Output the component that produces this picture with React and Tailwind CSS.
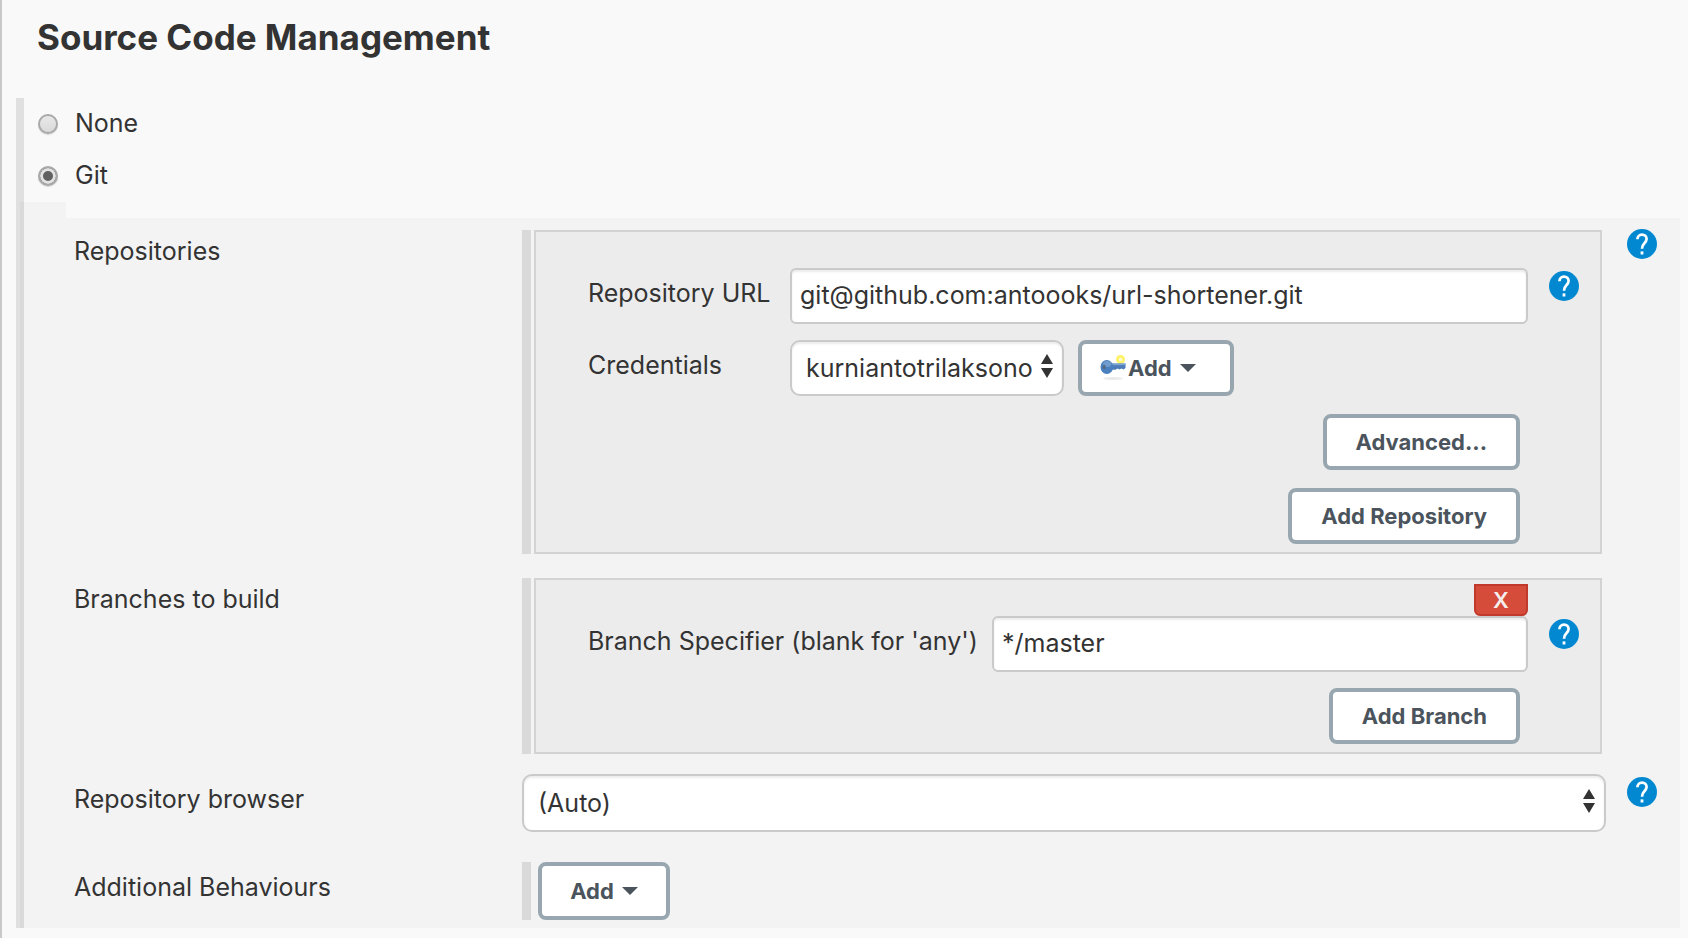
const inputBase =
  'w-full h-14 px-2 pb-[2px] border-2 border-[#cacaca] rounded-md bg-white text-[25px] text-[#333] shadow-[inset_0_2px_2px_rgba(0,0,0,0.08)] outline-none'

const buttonBase =
  'inline-flex items-center border-4 border-[#98a7af] rounded-lg bg-white text-[22px] leading-7 font-bold text-[#4b545d] whitespace-nowrap'

function HelpIcon({ topic }) {
  return (
    <button type="button" aria-label={`Help for ${topic}`} className="block w-[30px] h-[30px] shrink-0">
      <svg viewBox="0 0 30 30" className="block w-full h-full">
        <circle cx="15" cy="15" r="15" fill="#0288d1" />
        <path
          d="M10.4 10.3C10.4 7.4 12.4 5.6 15 5.6s4.6 1.8 4.6 4.5c0 1.9-1 3-2.4 4.4-1.5 1.4-2.2 2.5-2.2 5.3"
          fill="none"
          stroke="#fff"
          strokeWidth="2.7"
        />
        <rect x="13.6" y="22.4" width="2.8" height="3.1" fill="#fff" />
      </svg>
    </button>
  )
}

function SelectBox({ id, value, className }) {
  return (
    <div className={`relative ${className}`}>
      <select
        id={id}
        className="appearance-none w-full h-full pl-[14px] pr-6 border-2 border-[#cacaca] rounded-[10px] bg-white text-[25px] text-[#333] shadow-[inset_0_2px_2px_rgba(0,0,0,0.08)] outline-none"
      >
        <option>{value}</option>
      </select>
      <svg viewBox="0 0 12 24" className="absolute right-[11px] top-1/2 -mt-[14px] w-3 h-6 pointer-events-none">
        <path d="M6 0l6 10H0zM6 24l6-10H0z" fill="#333" />
      </svg>
    </div>
  )
}

function Caret() {
  return (
    <svg viewBox="0 0 16 8" className="w-4 h-2">
      <path d="M0 0h16L8 8z" fill="#4b545d" />
    </svg>
  )
}

function KeyIcon() {
  return (
    <svg viewBox="0 0 26 26" className="w-[26px] h-[26px]">
      <ellipse cx="13" cy="23.5" rx="10" ry="1.4" fill="#e9e9e9" />
      <circle cx="20.5" cy="4.5" r="4.5" fill="#fdf36b" />
      <circle cx="20.5" cy="4.5" r="1.8" fill="#fffbd0" />
      <path d="M11 8.6h14.5v4.4l-2 1.6-2-1.2-2 1.2-2-1-2 1.2H11z" fill="#4c7db9" />
      <path d="M11 8.6h14.5v1.6H11z" fill="#7ba4d3" />
      <ellipse cx="6.8" cy="12" rx="6.3" ry="7" fill="#4a80bf" />
      <ellipse cx="7.2" cy="9" rx="4.2" ry="3" fill="#6f9bce" />
      <ellipse cx="4.2" cy="12" rx="1.5" ry="2.2" fill="#56697f" />
    </svg>
  )
}

function ScmRadio({ id, label, checked }) {
  return (
    <div className="flex items-center gap-[17px] h-[52px] pl-[14px]">
      <input
        type="radio"
        name="scm"
        id={id}
        defaultChecked={checked}
        className="appearance-none w-5 h-5 rounded-full border-2 border-[#a9a9a9] bg-linear-to-b from-[#e8e8e8] to-[#dadada] shadow-[0_1px_1px_rgba(0,0,0,0.15)] checked:bg-none checked:bg-[#606060] checked:shadow-[inset_0_0_0_3px_#e2e2e2,0_1px_1px_rgba(0,0,0,0.15)]"
      />
      <label htmlFor={id} className="pb-[2px]">{label}</label>
    </div>
  )
}

function Row({ label, htmlFor, help, children }) {
  return (
    <div className="grid grid-cols-[448px_minmax(0,1fr)_74px]">
      {htmlFor ? (
        <label htmlFor={htmlFor} className="pt-[11px]">{label}</label>
      ) : (
        <div className="pt-[7px]">{label}</div>
      )}
      {children}
      <div className={htmlFor ? 'pl-[21px] pt-[3px]' : 'pl-[21px] -mt-px'}>{help && <HelpIcon topic={label} />}</div>
    </div>
  )
}

// Grey drag bar on the left with the repeatable item next to it
function Chunk({ children }) {
  return (
    <div className="flex gap-[3px] mr-1">
      <div className="w-[9px] shrink-0 bg-[#d9d9d9]" />
      <div className="grow min-w-0 border-2 border-[#d3d3d3] bg-[#ececec] pl-[52px] pr-[22px] pb-2">
        {children}
      </div>
    </div>
  )
}

export default function App() {
  return (
    <main className="min-h-screen border-l-2 border-[#c9c9c9] bg-[#f9f9f9] pl-[14px] pr-2 pb-[10px] text-[25px] leading-7 text-[#333] font-[Inter,sans-serif]">
      <h1 className="pl-[21px] pt-[15px] pb-[39px] text-[35px] leading-[44px] font-bold">Source Code Management</h1>

      <form className="border-l-4 border-[#e0e0e0]" onSubmit={(e) => e.preventDefault()}>
        <div className="border-l-4 border-[#e0e0e0] h-[104px]">
          <ScmRadio id="scm-none" label="None" />
          <ScmRadio id="scm-git" label="Git" checked />
        </div>

        <div className="border-l-4 border-[#d9d9d9]">
          <div className="w-[42px] h-4 bg-[#f3f3f3]" />

          <div className="bg-[#f3f3f3] pl-[50px] pt-3 pb-2">
            <Row label="Repositories" help>
              <Chunk>
                <div className="grid grid-cols-[202px_minmax(0,1fr)_50px] pt-9">
                  <label htmlFor="repo-url" className="pt-[11px]">Repository URL</label>
                  <input id="repo-url" type="text" defaultValue="git@github.com:antoooks/url-shortener.git" className={inputBase} />
                  <div className="pl-[21px] pt-[3px]">
                    <HelpIcon topic="Repository URL" />
                  </div>
                </div>
                <div className="grid grid-cols-[202px_minmax(0,1fr)] pt-4">
                  <label htmlFor="credentials" className="pt-[11px]">Credentials</label>
                  <div className="flex gap-[14px]">
                    <SelectBox id="credentials" value="kurniantotrilaksono" className="w-[274px] h-14" />
                    <button type="button" className={`${buttonBase} h-14 w-[156px] pl-[18px]`}>
                      <KeyIcon />
                      <span className="pl-[2px] pr-2">Add</span>
                      <Caret />
                    </button>
                  </div>
                </div>
                <div className="flex flex-col items-end gap-[18px] pt-[18px] pr-[58px]">
                  <button type="button" className={`${buttonBase} h-14 px-[29px]`}>Advanced...</button>
                  <button type="button" className={`${buttonBase} h-14 px-[29px]`}>Add Repository</button>
                </div>
              </Chunk>
            </Row>

            <div className="pt-6">
              <Row label="Branches to build">
                <Chunk>
                  <div className="flex justify-end pt-1 pr-[50px]">
                    <button
                      type="button"
                      className="w-[54px] h-8 border-2 border-[#c0392b] rounded-b-md bg-[#d54c3a] text-[22px] leading-7 font-semibold text-[#f5eeee]"
                    >
                      X
                    </button>
                  </div>
                  <div className="grid grid-cols-[404px_minmax(0,1fr)_50px]">
                    <label htmlFor="branch" className="pt-[11px]">Branch Specifier (blank for 'any')</label>
                    <input id="branch" type="text" defaultValue="*/master" className={inputBase} />
                    <div className="pl-[21px] pt-[3px]">
                      <HelpIcon topic="Branch Specifier" />
                    </div>
                  </div>
                  <div className="flex justify-end pt-4 pr-[58px]">
                    <button type="button" className={`${buttonBase} h-14 px-[29px]`}>Add Branch</button>
                  </div>
                </Chunk>
              </Row>
            </div>

            <div className="pt-5">
              <Row label="Repository browser" htmlFor="browser" help>
                <SelectBox id="browser" value="(Auto)" className="h-[58px]" />
              </Row>
            </div>

            <div className="pt-[30px]">
              <div className="grid grid-cols-[448px_minmax(0,1fr)]">
                <div className="pt-[11px]">Additional Behaviours</div>
                <div className="flex gap-[7px]">
                  <div className="w-[9px] bg-[#d9d9d9]" />
                  <button type="button" className={`${buttonBase} h-[58px] w-[132px] justify-center gap-2`}>
                    Add
                    <Caret />
                  </button>
                </div>
              </div>
            </div>
          </div>
        </div>
      </form>
    </main>
  )
}
